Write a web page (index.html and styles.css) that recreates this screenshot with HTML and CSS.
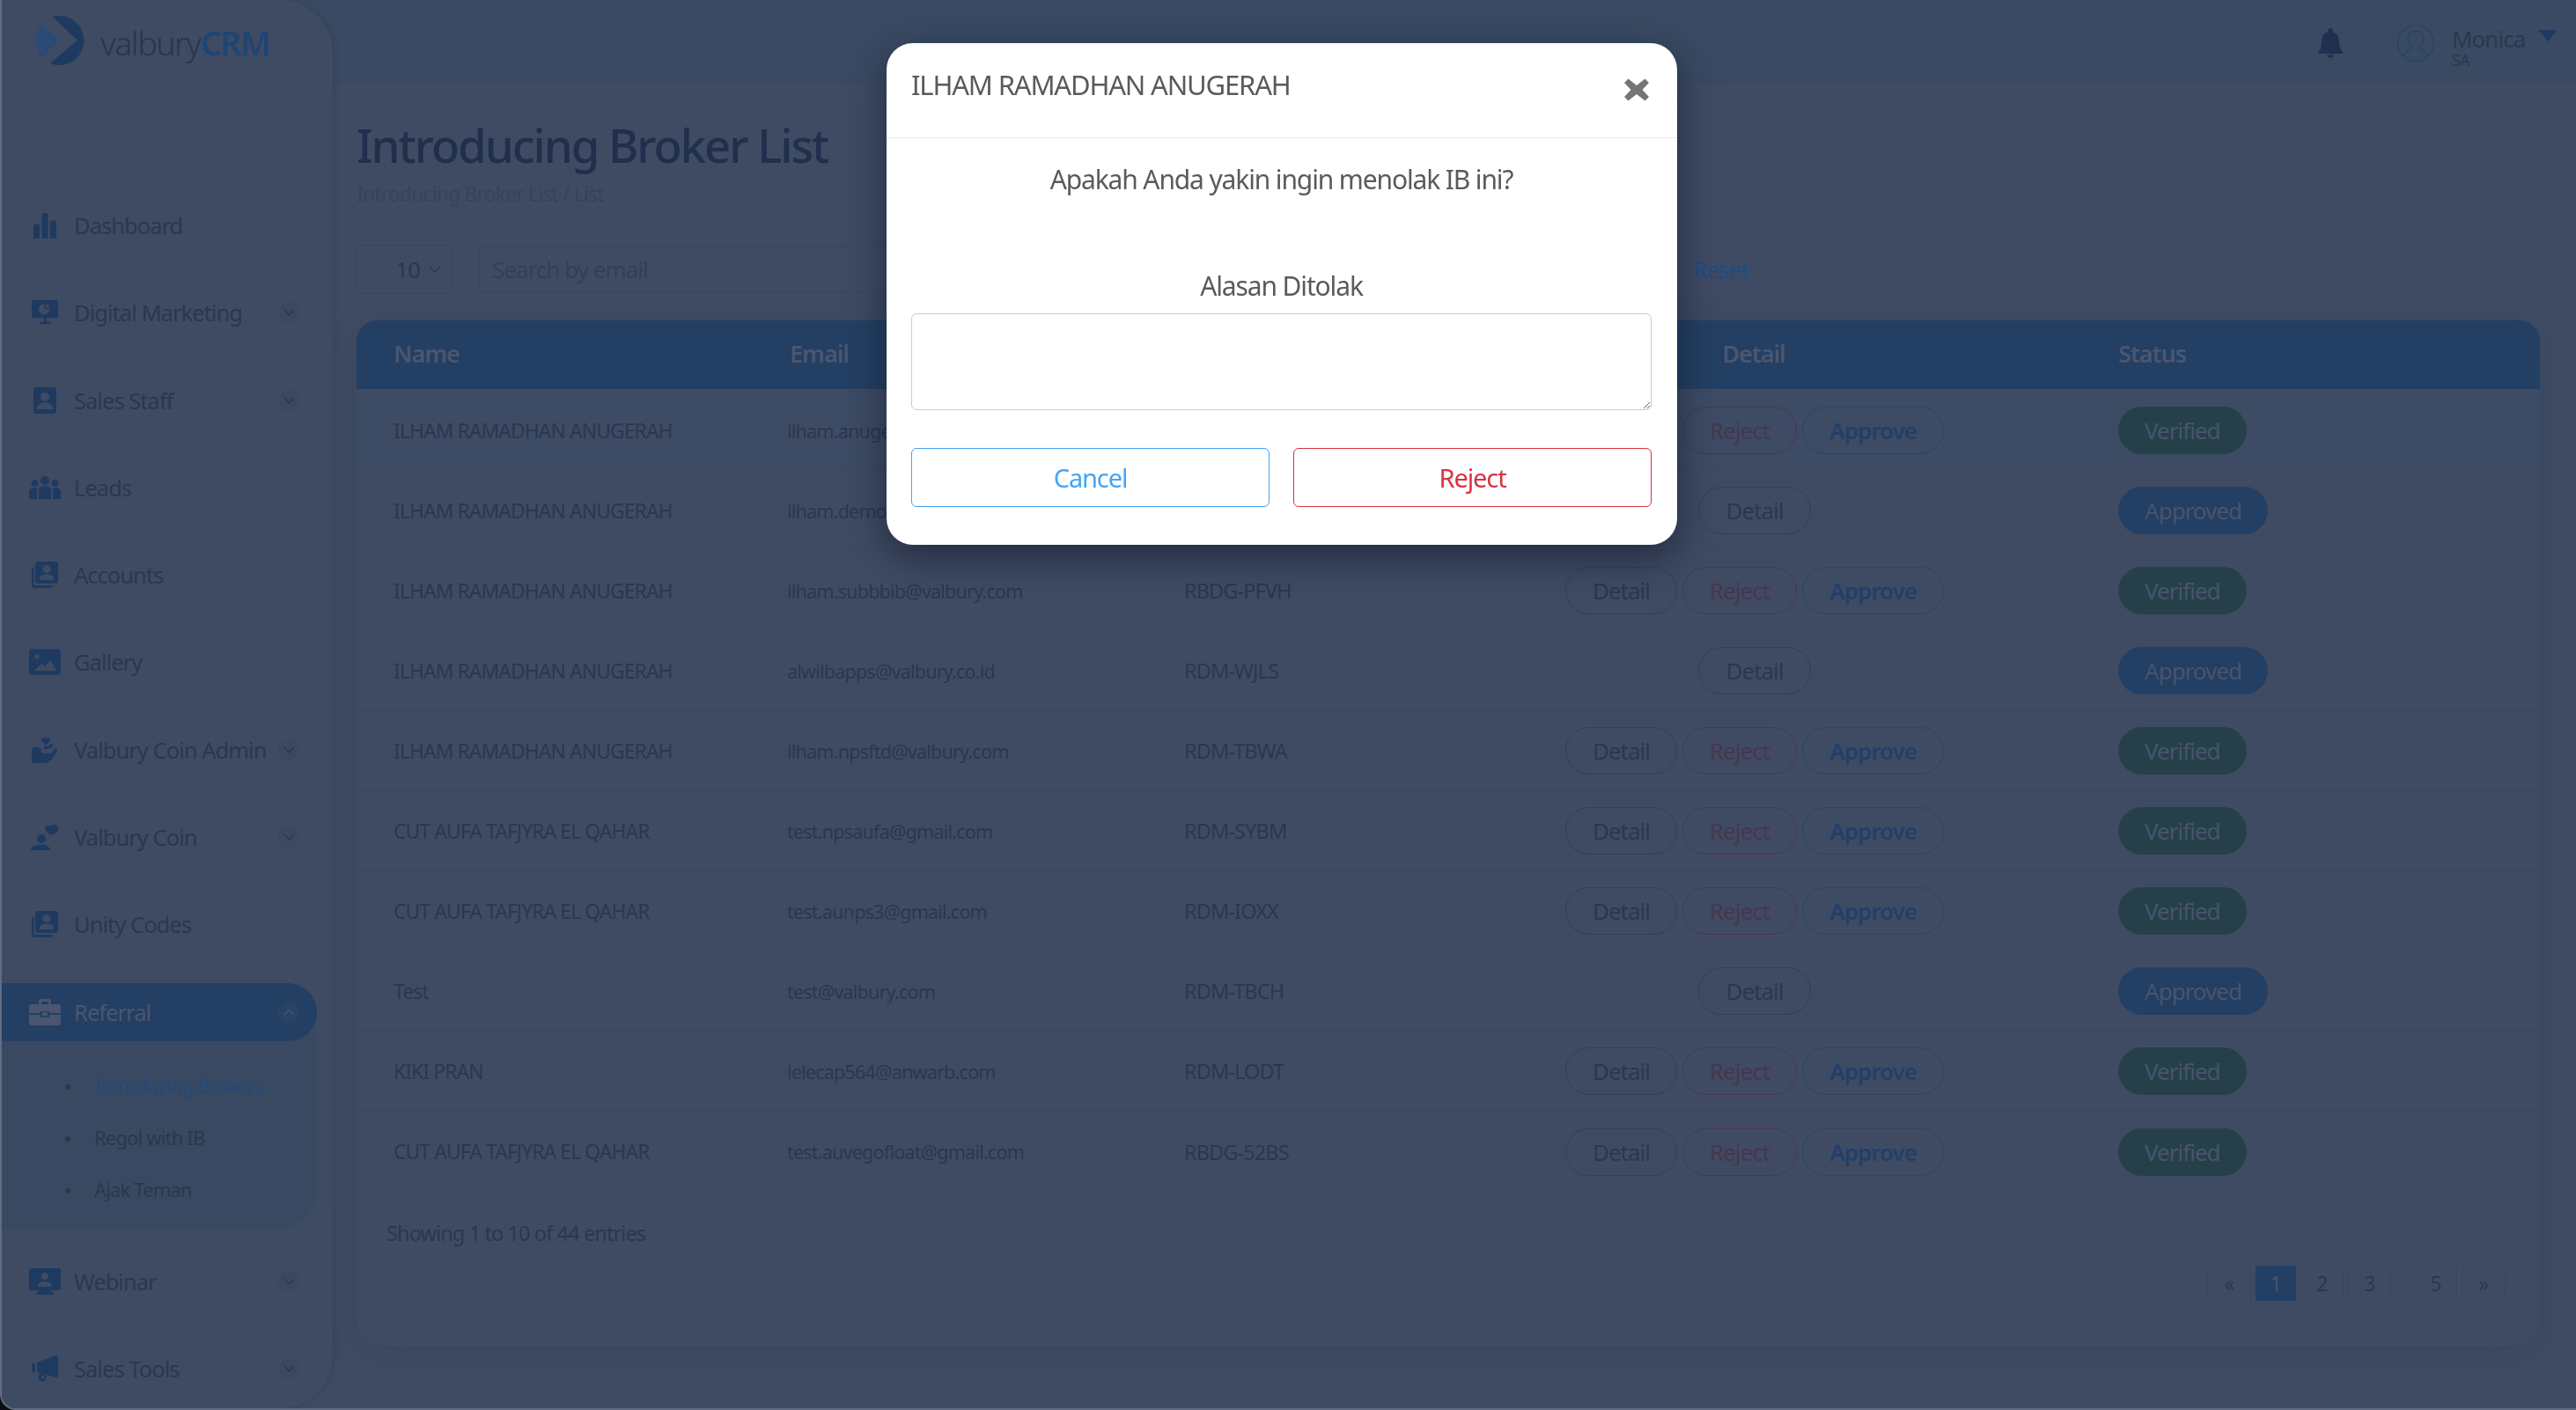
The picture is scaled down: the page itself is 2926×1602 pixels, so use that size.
FILE: index.html
```html
<!DOCTYPE html>
<html lang="id">
<head>
  <meta charset="UTF-8" />
  <title>Introducing Broker List</title>
  <link rel="stylesheet" href="styles.css">
</head>
<body>
  <svg class="sprite" xmlns="http://www.w3.org/2000/svg">
    <symbol id="i-bars" viewBox="0 0 30 30"><path d="M2 15.500a2 2 0 0 1 2-2h3a2 2 0 0 1 2 2V30H2zM11.500 3a2 2 0 0 1 2-2h3a2 2 0 0 1 2 2v27h-7zM21 11.500a2 2 0 0 1 2-2h3a2 2 0 0 1 2 2V30h-7z"/></symbol>
    <symbol id="i-screen" viewBox="0 0 34 34"><path fill-rule="evenodd" d="M3 1h28a3 3 0 0 1 3 3v17a3 3 0 0 1-3 3H19v5h6v3H10v-3h6v-5H3a3 3 0 0 1-3-3V4a3 3 0 0 1 3-3zm13 5a7 7 0 1 0 7 7h-7zm2 0v5h5a6 6 0 0 0-5-5z"/></symbol>
    <symbol id="i-badge" viewBox="0 0 30 30"><path fill-rule="evenodd" d="M5 0h20a3 3 0 0 1 3 3v24a3 3 0 0 1-3 3H5a3 3 0 0 1-3-3V3a3 3 0 0 1 3-3zm10 6a5 5 0 1 0 0 10 5 5 0 0 0 0-10zM6 25h18v-2c0-3.500-5-5.500-9-5.500S6 19.500 6 23z"/></symbol>
    <symbol id="i-users" viewBox="0 0 36 26"><path d="M18 0a5 5 0 1 1 0 10 5 5 0 0 1 0-10zM6.500 4a4 4 0 1 1 0 8 4 4 0 0 1 0-8zM29.500 4a4 4 0 1 1 0 8 4 4 0 0 1 0-8zM11 26V16c0-3 3-5 7-5s7 2 7 5v10zM0 26v-8c0-3 3-5 6.500-5 1.500 0 2.500.3 3.500 1-.6.800-1 1.800-1 3v9zM36 26v-8c0-3-3-5-6.500-5-1.500 0-2.500.3-3.500 1 .6.800 1 1.800 1 3v9z"/></symbol>
    <symbol id="i-cards" viewBox="0 0 30 30"><path fill-rule="evenodd" d="M7 0h20a3 3 0 0 1 3 3v19a3 3 0 0 1-3 3H7a3 3 0 0 1-3-3V3a3 3 0 0 1 3-3zm10 4a4.500 4.500 0 1 0 0 9 4.500 4.500 0 0 0 0-9zM9 21h16v-2c0-3-5-4.500-8-4.500S9 16 9 19zM0 7h2.500v20h21v3H3a3 3 0 0 1-3-3z"/></symbol>
    <symbol id="i-image" viewBox="0 0 32 26"><path fill-rule="evenodd" d="M3 0h26a3 3 0 0 1 3 3v20a3 3 0 0 1-3 3H3a3 3 0 0 1-3-3V3a3 3 0 0 1 3-3zm5 5a2.500 2.500 0 1 0 0 5 2.500 2.500 0 0 0 0-5zM5 22h23l-7-11-5 7-3-3.500z"/></symbol>
    <symbol id="i-hand" viewBox="0 0 30 30"><path d="M16 9.500 11 5a3 3 0 0 1 5-3 3 3 0 0 1 5 3zM0 15a3 3 0 0 1 3-3c5 0 8 1.500 8 3v1.500c0 2 2 2.500 4 2.500h5c2 0 3-1 4-2.500l2-3c1-1.300 4 0 3 2.500-2 5-5 9-9 12-3 2-7 2.500-12 2.500H3a3 3 0 0 1-3-3zM14 11c4 0 6-1 8-2.500 1.500-1 4 1.500 1 3.500-2 1.300-6 2.500-9 2.500z"/></symbol>
    <symbol id="i-care" viewBox="0 0 32 30"><path d="M22 13 17 7.500C14 3.500 19-.5 22 3c3-3.500 10-2.500 9.500 3-.3 3-4.500 6-9.500 7zM12 12a5 5 0 1 1 0 10 5 5 0 0 1 0-10zM0 30c0-4 5-6.500 11-6.500S22 26 22 30z"/></symbol>
    <symbol id="i-case" viewBox="0 0 36 30"><path fill-rule="evenodd" d="M11 6V3a3 3 0 0 1 3-3h8a3 3 0 0 1 3 3v3h8a3 3 0 0 1 3 3v7H23v-2h-10v2H0V9a3 3 0 0 1 3-3zm3 0h8V3h-8zM0 18h13v3h10v-3h13v9a3 3 0 0 1-3 3H3a3 3 0 0 1-3-3zm15-3h6v4h-6z"/></symbol>
    <symbol id="i-webinar" viewBox="0 0 36 30"><path fill-rule="evenodd" d="M3 0h30a3 3 0 0 1 3 3v19a3 3 0 0 1-3 3h-8l4 5H7l4-5H3a3 3 0 0 1-3-3V3a3 3 0 0 1 3-3zm15 5a4 4 0 1 0 0 8 4 4 0 0 0 0-8zm-8 16h16v-1c0-3-4-5-8-5s-8 2-8 5z"/></symbol>
    <symbol id="i-mega" viewBox="0 0 30 30"><path d="M0 9h4v10H0zM6 8l21-8h3v25h-3l-21-6zM9 20l6 2 2 1-1 4c-.5 2-2.500 3-4 2.500l-2-.7c-2-.7-3-2.500-2.500-4zm2.500 3-.8 2.800 3 .9.800-2.800z"/></symbol>
    <symbol id="i-down" viewBox="0 0 14 8"><path d="m1 1 6 6 6-6" fill="none" stroke="currentColor" stroke-width="1.400"/></symbol>
  </svg>

  <div class="app">
    <aside class="sidebar">
      <div class="logo">
        <svg class="logoMark" viewBox="0 0 56 56"><path class="logoBack" d="M20 1A28 28 0 1 1 17 54L48 28z"/><path class="logoFront" d="M8 9 27 28 8 47A28 28 0 0 1 8 9z"/></svg>
        <span class="logoText">valbury<b>CRM</b></span>
      </div>
      <div class="sideScroll"></div>
      <nav class="nav">
        <a class="navItem"><svg class="navIcon"><use href="#i-bars"/></svg><span>Dashboard</span></a>
        <a class="navItem"><svg class="navIcon"><use href="#i-screen"/></svg><span>Digital Marketing</span><i class="chev"><svg><use href="#i-down"/></svg></i></a>
        <a class="navItem"><svg class="navIcon"><use href="#i-badge"/></svg><span>Sales Staff</span><i class="chev"><svg><use href="#i-down"/></svg></i></a>
        <a class="navItem"><svg class="navIcon"><use href="#i-users"/></svg><span>Leads</span></a>
        <a class="navItem"><svg class="navIcon"><use href="#i-cards"/></svg><span>Accounts</span></a>
        <a class="navItem"><svg class="navIcon"><use href="#i-image"/></svg><span>Gallery</span></a>
        <a class="navItem"><svg class="navIcon"><use href="#i-hand"/></svg><span>Valbury Coin Admin</span><i class="chev"><svg><use href="#i-down"/></svg></i></a>
        <a class="navItem"><svg class="navIcon"><use href="#i-care"/></svg><span>Valbury Coin</span><i class="chev"><svg><use href="#i-down"/></svg></i></a>
        <a class="navItem"><svg class="navIcon"><use href="#i-cards"/></svg><span>Unity Codes</span></a>
        <div class="navGroup">
          <a class="navItem active"><svg class="navIcon"><use href="#i-case"/></svg><span>Referral</span><i class="chev up"><svg><use href="#i-down"/></svg></i></a>
          <ul class="subNav">
            <li class="current">Introducing Brokers</li>
            <li>Regol with IB</li>
            <li>Ajak Teman</li>
          </ul>
        </div>
        <a class="navItem"><svg class="navIcon"><use href="#i-webinar"/></svg><span>Webinar</span><i class="chev"><svg><use href="#i-down"/></svg></i></a>
        <a class="navItem"><svg class="navIcon"><use href="#i-mega"/></svg><span>Sales Tools</span><i class="chev"><svg><use href="#i-down"/></svg></i></a>
      </nav>
    </aside>

    <div class="main">
      <header class="topbar">
        <svg class="bell" viewBox="0 0 28 34"><path d="M14 0a3 3 0 0 1 3 3v1.500c5 1.500 7 5.500 7 11 0 6 1.500 9 4 11.500v2H0v-2c2.500-2.500 4-5.500 4-11.500 0-5.500 2-9.500 7-11V3a3 3 0 0 1 3-3zM10 30.500h8a4 3 0 0 1-8 0z"/></svg>
        <svg class="avatar" viewBox="0 0 44 44"><circle cx="22" cy="22" r="20.500"/><path d="M8 36c1-3 3-4 6-5 3-1 4-2 4-4-3-3-5-7-5-11 0-5 4-8 9-8s9 3 9 8c0 4-2 8-5 11 0 2 1 3 4 4 3 1 5 2 6 5"/></svg>
        <div class="who"><span class="whoName">Monica</span><span class="whoRole">SA</span></div>
        <span class="caret"></span>
      </header>

      <section class="content">
        <h1 class="pageTitle">Introducing Broker List</h1>
        <p class="crumbs">Introducing Broker List / List</p>

        <div class="filters">
          <div class="pageSize">10<svg><use href="#i-down"/></svg></div>
          <div class="searchBox">Search by email</div>
          <a class="resetLink">Reset</a>
        </div>

        <div class="card">
          <div class="tableRow tableHead">
            <div>Name</div><div class="headEmail">Email</div><div>Code</div><div class="cellCenter">Detail</div><div>Status</div>
          </div>
          <div class="tableBody">
            <div class="tableRow hovered">
              <div>ILHAM RAMADHAN ANUGERAH</div><div class="cellMail">ilham.anugerah@valbury.com</div><div class="cellCode">RDM-KQPA</div>
              <div class="actions"><a class="pill">Detail</a><a class="pill pillReject">Reject</a><a class="pill pillApprove">Approve</a></div>
              <div><span class="badge verified">Verified</span></div>
            </div>
            <div class="tableRow">
              <div>ILHAM RAMADHAN ANUGERAH</div><div class="cellMail">ilham.demo@valbury.com</div><div class="cellCode">RDM-HTQE</div>
              <div class="actions"><a class="pill">Detail</a></div>
              <div><span class="badge approved">Approved</span></div>
            </div>
            <div class="tableRow">
              <div>ILHAM RAMADHAN ANUGERAH</div><div class="cellMail">ilham.subbbib@valbury.com</div><div class="cellCode">RBDG-PFVH</div>
              <div class="actions"><a class="pill">Detail</a><a class="pill pillReject">Reject</a><a class="pill pillApprove">Approve</a></div>
              <div><span class="badge verified">Verified</span></div>
            </div>
            <div class="tableRow">
              <div>ILHAM RAMADHAN ANUGERAH</div><div class="cellMail">alwilbapps@valbury.co.id</div><div class="cellCode">RDM-WJLS</div>
              <div class="actions"><a class="pill">Detail</a></div>
              <div><span class="badge approved">Approved</span></div>
            </div>
            <div class="tableRow">
              <div>ILHAM RAMADHAN ANUGERAH</div><div class="cellMail">ilham.npsftd@valbury.com</div><div class="cellCode">RDM-TBWA</div>
              <div class="actions"><a class="pill">Detail</a><a class="pill pillReject">Reject</a><a class="pill pillApprove">Approve</a></div>
              <div><span class="badge verified">Verified</span></div>
            </div>
            <div class="tableRow">
              <div>CUT AUFA TAFJYRA EL QAHAR</div><div class="cellMail">test.npsaufa@gmail.com</div><div class="cellCode">RDM-SYBM</div>
              <div class="actions"><a class="pill">Detail</a><a class="pill pillReject">Reject</a><a class="pill pillApprove">Approve</a></div>
              <div><span class="badge verified">Verified</span></div>
            </div>
            <div class="tableRow">
              <div>CUT AUFA TAFJYRA EL QAHAR</div><div class="cellMail">test.aunps3@gmail.com</div><div class="cellCode">RDM-IOXX</div>
              <div class="actions"><a class="pill">Detail</a><a class="pill pillReject">Reject</a><a class="pill pillApprove">Approve</a></div>
              <div><span class="badge verified">Verified</span></div>
            </div>
            <div class="tableRow">
              <div>Test</div><div class="cellMail">test@valbury.com</div><div class="cellCode">RDM-TBCH</div>
              <div class="actions"><a class="pill">Detail</a></div>
              <div><span class="badge approved">Approved</span></div>
            </div>
            <div class="tableRow">
              <div>KIKI PRAN</div><div class="cellMail">lelecap564@anwarb.com</div><div class="cellCode">RDM-LODT</div>
              <div class="actions"><a class="pill">Detail</a><a class="pill pillReject">Reject</a><a class="pill pillApprove">Approve</a></div>
              <div><span class="badge verified">Verified</span></div>
            </div>
            <div class="tableRow noLine">
              <div>CUT AUFA TAFJYRA EL QAHAR</div><div class="cellMail">test.auvegofloat@gmail.com</div><div class="cellCode">RBDG-52BS</div>
              <div class="actions"><a class="pill">Detail</a><a class="pill pillReject">Reject</a><a class="pill pillApprove">Approve</a></div>
              <div><span class="badge verified">Verified</span></div>
            </div>
          </div>
          <div class="tableFoot">
            <div class="entries">Showing 1 to 10 of 44 entries</div>
            <div class="pager">
              <a class="page first">«</a><a class="page current">1</a><a class="page">2</a><a class="page">3</a><a class="page gap">5</a><a class="page last">»</a>
            </div>
          </div>
        </div>
      </section>
    </div>
  </div>

  <div class="overlay">
    <div class="modal">
      <div class="modalHead">
        <span class="modalTitle">ILHAM RAMADHAN ANUGERAH</span>
        <svg class="modalClose" viewBox="0 0 30 30"><path d="M5.500 2.500 15 10l9.500-7.500 4.500 4.500-7.500 8 7.500 8-4.500 4.500L15 20l-9.500 7.500L1 23l7.500-8L1 7z"/></svg>
      </div>
      <div class="modalBody">
        <p class="question">Apakah Anda yakin ingin menolak IB ini?</p>
        <label class="reasonLabel">Alasan Ditolak</label>
        <textarea class="reason"></textarea>
        <div class="modalActions">
          <button class="btnCancel">Cancel</button>
          <button class="btnReject">Reject</button>
        </div>
      </div>
    </div>
  </div>
</body>
</html>
```

FILE: styles.css
```css
* {
  box-sizing: border-box;
  letter-spacing: -0.038em;
}
html {
  background: #0b0e14;
}
body {
  margin: 0;
  width: 2926px;
  height: 1602px;
  overflow: hidden;
  font-family: "Noto Sans", "Open Sans", sans-serif;
  color: #2b3750;
}
.sprite {
  display: none;
}
a {
  text-decoration: none;
}

.app {
  display: flex;
  height: 1602px;
  background: #3f4b63;
  border-left: 2px solid #626d83;
  border-bottom: 2px solid #626d83;
  border-bottom-left-radius: 18px;
  overflow: hidden;
}

/* sidebar */
.sidebar {
  position: relative;
  flex: 0 0 376px;
  background: #3f4b63;
  border-radius: 0 60px 60px 0;
  box-shadow: 2px 0 6px rgba(40, 55, 80, 0.35);
  z-index: 2;
}
.logo {
  display: flex;
  align-items: center;
  gap: 18px;
  height: 92px;
  padding-left: 38px;
}
.logoMark {
  width: 56px;
  height: 56px;
}
.logoBack {
  fill: #1f3a60;
}
.logoFront {
  fill: #2b4a75;
}
.logoText {
  font-size: 37.500px;
  font-weight: 300;
  color: #263650;
  position: relative;
  top: 2px;
}
.logoText b {
  font-weight: 600;
  color: #1f4573;
}
.sideScroll {
  position: absolute;
  top: 113px;
  right: 0;
  width: 14px;
  height: 1264px;
  background: #3c4a62;
  border-radius: 7px;
}
.nav {
  position: relative;
  display: flex;
  flex-direction: column;
  padding-top: 131px;
}
.navItem {
  display: flex;
  align-items: center;
  height: 66px;
  margin-bottom: 33.3px;
  width: 358px;
  padding-left: 31px;
  font-size: 25.500px;
  color: #2b3750;
  border-radius: 0 33px 33px 0;
}
.navIcon {
  flex: 0 0 36px;
  width: 36px;
  height: 30px;
  margin-right: 15px;
  fill: #1f3a60;
}
.navItem span {
  flex: 1;
  white-space: nowrap;
}
.chev {
  display: flex;
  align-items: center;
  justify-content: center;
  flex: 0 0 24px;
  width: 24px;
  height: 24px;
  margin-right: 20px;
  border-radius: 50%;
  background: #3c485f;
  color: #2b3750;
}
.chev svg {
  width: 13px;
  height: 8px;
}
.chev.up svg {
  transform: rotate(180deg);
}
.navItem.active {
  margin-bottom: 0;
  background: #233f63;
  color: #4a5670;
}
.navItem.active .navIcon {
  fill: #4a5670;
}
.navItem.active .chev {
  background: #274366;
  color: #4a5670;
}
.navGroup {
  width: 358px;
  margin-bottom: 27px;
  background: #394961;
  border-radius: 0 33px 44px 0;
}
.subNav {
  list-style: none;
  margin: 0;
  padding: 21px 0 0 72px;
  height: 213px;
  font-size: 22px;
  color: #2b3750;
}
.subNav li {
  position: relative;
  height: 59px;
  line-height: 59px;
  padding-left: 33px;
  white-space: nowrap;
}
.subNav li::before {
  content: "";
  position: absolute;
  left: 0;
  top: 28px;
  width: 6px;
  height: 6px;
  border-radius: 50%;
  background: #2b3750;
}
.subNav .current {
  color: #234a7a;
}

/* top */
.main {
  flex: 1;
  min-width: 0;
}
.topbar {
  display: flex;
  align-items: center;
  height: 97px;
  margin-left: -60px;
  background: #3a4a63;
  padding-right: 21px;
  justify-content: flex-end;
}
.bell {
  width: 28px;
  height: 34px;
  fill: #1f3050;
  margin-right: 61px;
}
.avatar {
  width: 44px;
  height: 44px;
  fill: none;
  stroke: #264468;
  stroke-width: 1.500;
  margin-right: 19px;
}
.who {
  display: flex;
  flex-direction: column;
  width: 98px;
  margin-top: 8px;
}
.whoName {
  font-size: 26px;
  line-height: 30px;
  color: #2b3750;
}
.whoRole {
  font-size: 18px;
  line-height: 18px;
  color: #2b3750;
}
.caret {
  width: 0;
  height: 0;
  align-self: flex-start;
  margin-top: 34px;
  border-left: 11px solid transparent;
  border-right: 11px solid transparent;
  border-top: 13px solid #1f3a60;
}

.content {
  padding: 0 41px 0 27px;
}
.pageTitle {
  margin: 33px 0 0;
  font-size: 52.600px;
  line-height: 70px;
  font-weight: 500;
  color: #1f2f4c;
}
.crumbs {
  margin: 4px 0 0;
  font-size: 23px;
  line-height: 32px;
  color: #37435c;
}
.filters {
  display: flex;
  align-items: center;
  gap: 31px;
  margin-top: 42px;
  height: 56px;
}
.pageSize {
  display: flex;
  align-items: center;
  justify-content: flex-end;
  gap: 10px;
  width: 108px;
  height: 56px;
  padding-right: 11px;
  border: 1px solid #394560;
  border-radius: 6px;
  font-size: 26px;
}
.pageSize svg {
  width: 14px;
  height: 8px;
  color: #2b3750;
}
.searchBox {
  width: 900px;
  height: 54px;
  line-height: 52px;
  padding-left: 14px;
  border: 1px solid #394560;
  border-radius: 6px;
  font-size: 26px;
  color: #333f59;
}
.resetLink {
  margin-left: 448px;
  font-size: 26px;
  color: #1f4c85;
}

/* table */
.card {
  margin-top: 30px;
  height: 1165px;
  border-radius: 30px;
  background: #3f4b63;
  box-shadow: 0 8px 30px rgba(45, 65, 95, 0.4);
}
.tableRow {
  display: grid;
  grid-template-columns: 489px 451px 400px 494px 1fr;
  align-items: center;
  height: 91px;
  font-size: 22.800px;
  border-bottom: 1px solid #3a4660;
}
.tableRow > div:first-child {
  padding-left: 42px;
}
.tableRow > div:last-child {
  padding-left: 167px;
}
.tableHead {
  height: 78px;
  padding-bottom: 4px;
  font-size: 27px;
  font-weight: 600;
  color: #4a5670;
  background: #233f63;
  border-bottom: 0;
  border-radius: 24px 24px 0 0;
}
.headEmail {
  padding-left: 3px;
}
.cellMail {
  font-size: 21.600px;
}
.cellCode {
  font-size: 23.500px;
}
.cellCenter {
  text-align: center;
}
.tableBody {
  padding-top: 2px;
}
.hovered {
  background: #3d4b64;
}
.noLine {
  border-bottom: 0;
}
.actions {
  display: flex;
  justify-content: center;
  gap: 6px;
  margin-left: 2px;
}
.pill {
  display: inline-flex;
  align-items: center;
  justify-content: center;
  height: 54px;
  padding: 0 30px;
  border: 1px solid #333f5a;
  border-radius: 27px;
  font-size: 26px;
  color: #2b3750;
}
.pillReject {
  border-color: #47384f;
  color: #47364f;
}
.pillApprove {
  border-color: #2a4468;
  color: #233f67;
  font-weight: 600;
}
.badge {
  display: inline-flex;
  align-items: center;
  height: 54px;
  padding: 0 30px;
  border-radius: 27px;
  font-size: 26px;
  color: #48546d;
}
.verified {
  background: #26404a;
}
.approved {
  background: #233f63;
}
.tableFoot {
  padding: 0 39px 0 34px;
}
.entries {
  padding-top: 31px;
  font-size: 23.500px;
  line-height: 32px;
}
.pager {
  display: flex;
  justify-content: flex-end;
  gap: 5px;
  margin-top: 21px;
}
.page {
  display: flex;
  align-items: center;
  justify-content: center;
  width: 49px;
  height: 40px;
  border: 1px solid #3a4660;
  font-size: 23px;
  color: #2b3750;
}
.page.first {
  width: 50px;
}
.page.current {
  width: 46px;
  background: #233f63;
  border-color: #233f63;
  color: #48546d;
}
.page.gap {
  margin-left: 21px;
}
.page.last {
  width: 50px;
  border-radius: 0 8px 8px 0;
}

/* modal */
.overlay {
  position: fixed;
  inset: 0;
  z-index: 10;
  display: flex;
  justify-content: center;
  align-items: flex-start;
  padding: 49px 14px 0 0;
}
.modal {
  width: 898px;
  height: 570px;
  background: #fff;
  border-radius: 30px;
  box-shadow: 0 14px 44px rgba(15, 22, 38, 0.6);
  color: #5a5a5a;
}
.modalHead {
  display: flex;
  justify-content: space-between;
  height: 108px;
  padding: 27px 31px 0 28px;
  border-bottom: 1px solid #e9ecef;
}
.modalTitle {
  font-size: 31px;
  line-height: 40px;
}
.modalClose {
  width: 30px;
  height: 30px;
  margin-top: 11px;
  fill: #757575;
}
.modalBody {
  display: flex;
  flex-direction: column;
  padding: 0 29px 0 28px;
}
.question {
  margin: 27px 0 0;
  text-align: center;
  font-size: 30px;
  line-height: 40px;
}
.reasonLabel {
  margin-top: 81px;
  text-align: center;
  font-size: 30px;
  line-height: 40px;
}
.reason {
  display: block;
  width: 100%;
  height: 110px;
  margin-top: 11px;
  border: 1px solid #ccc;
  border-radius: 6px;
  background: #fff;
}
.modalActions {
  display: flex;
  gap: 27px;
  margin-top: 43px;
}
.modalActions button {
  flex: 1;
  height: 67px;
  background: #fff;
  border-radius: 6px;
  font-family: inherit;
  font-size: 29px;
}
.btnCancel {
  border: 1px solid #42a5f5;
  color: #42a5f5;
}
.btnReject {
  border: 1px solid #d9333f;
  color: #d9333f;
}
```
